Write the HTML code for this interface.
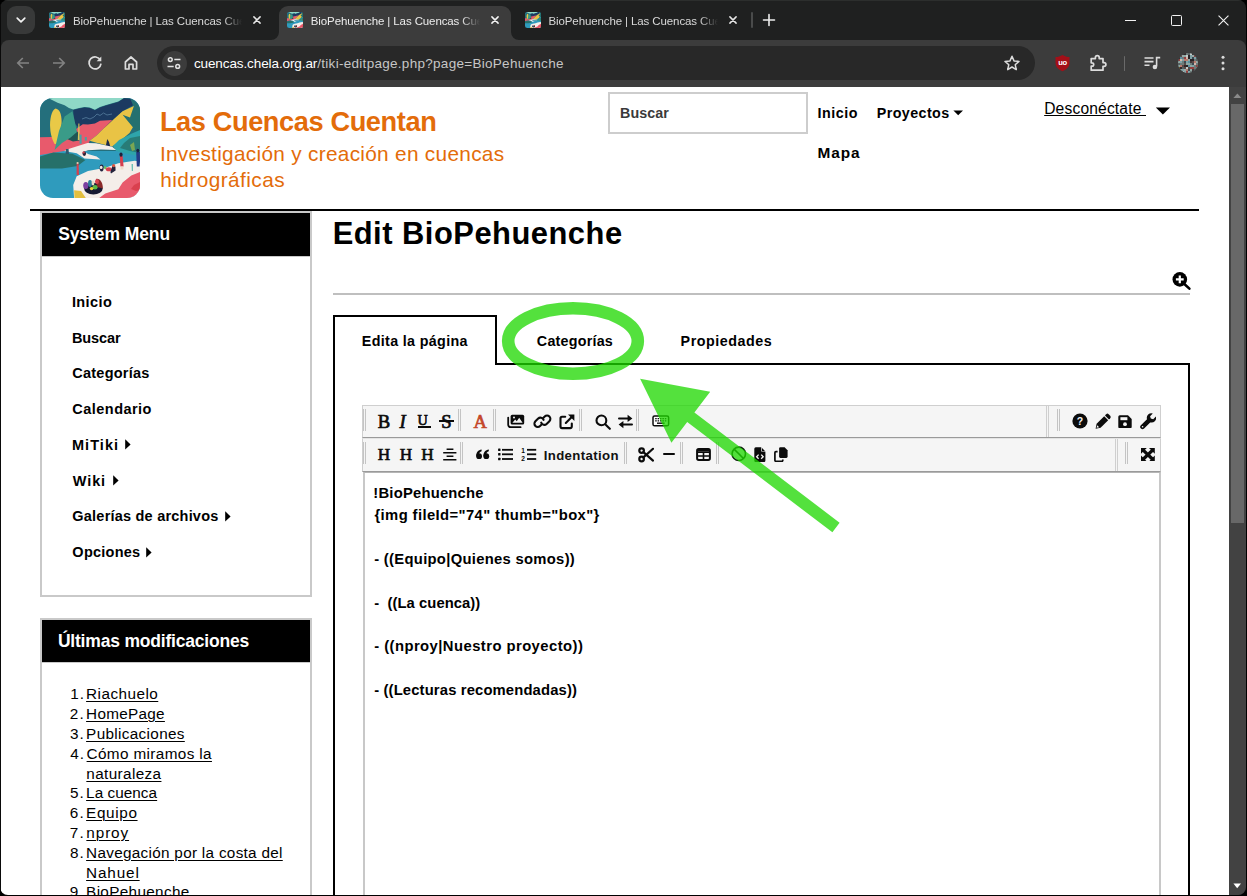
<!DOCTYPE html>
<html lang="es">
<head>
<meta charset="utf-8">
<title>BioPehuenche | Las Cuencas Cuentan</title>
<style>
*{box-sizing:border-box;margin:0;padding:0}
html,body{width:1247px;height:896px;overflow:hidden;background:#000}
body{position:relative;font-family:"Liberation Sans",sans-serif;}
.abs{position:absolute}
.t{position:absolute;white-space:nowrap;font-family:"Liberation Sans",sans-serif;}
#win{position:absolute;left:0;top:0;width:1246px;height:895px;background:#1f2020;border-radius:8px;overflow:hidden}
#page{position:absolute;left:1px;top:87px;width:1228px;height:808px;background:#fff;overflow:hidden}
#scroll{position:absolute;left:1229px;top:87px;width:17px;height:808px;background:#424242}
#thumb{position:absolute;left:2px;top:17px;width:13px;height:419px;background:#686868}
.tabt{top:13px;height:16px;font-size:11.5px;line-height:16px;letter-spacing:-0.11px;white-space:nowrap;overflow:hidden;-webkit-mask-image:linear-gradient(90deg,#000 0,#000 150px,transparent 169px);mask-image:linear-gradient(90deg,#000 0,#000 150px,transparent 169px)}
.ct{position:absolute;white-space:nowrap;font-family:"Liberation Sans",sans-serif;}
</style>
</head>
<body>
<div id="win">
<div id="page"></div>
<div id="scroll"><div id="thumb"></div></div>
<!-- tab strip -->
<div class="abs" style="left:7px;top:6px;width:27.5px;height:27.5px;border-radius:9px;background:#383939"></div>
<svg class="abs" style="left:15px;top:13.8px" width="12" height="12" viewBox="0 0 12 12"><path d="M2.2 4.2 L6 7.8 L9.8 4.2" fill="none" stroke="#f2f2f2" stroke-width="1.7" stroke-linecap="round" stroke-linejoin="round"/></svg>
<!-- active tab -->
<div class="abs" style="left:279px;top:6px;width:231.5px;height:34px;background:#3c3c3c;border-radius:9px 9px 0 0"></div>
<svg class="abs" style="left:271px;top:32px" width="8" height="8" viewBox="0 0 8 8"><path d="M8 0 V8 H0 A8 8 0 0 0 8 0Z" fill="#3c3c3c"/></svg>
<svg class="abs" style="left:510.5px;top:32px" width="8" height="8" viewBox="0 0 8 8"><path d="M0 0 V8 H8 A8 8 0 0 1 0 0Z" fill="#3c3c3c"/></svg>
<!-- favicons -->
<svg class="abs" style="left:48.8px;top:12px;border-radius:2.5px;overflow:hidden" width="16" height="16" viewBox="0 0 100 100"><rect width="100" height="100" fill="#2f9bbd"/>
<rect width="100" height="53" fill="#246f7c"/>
<path d="M8 0 L17.6 4.7 L24.6 7.3 L28.9 9.9 L33.2 11.4 L39.3 9.9 L44.5 9 L49.7 9.4 L54.9 11.8 L60 9 L65.3 7.3 L71.3 5.5 L78.3 3.4 L84 0 Z" fill="#8fd8c7"/>
<path d="M33.2 11.9 L39.3 10.4 L44.5 9.5 L49.7 9.9 L54.9 12.3 L60 9.5 L65.3 7.8 L71.3 6 L78.3 3.9 L84 0.3 L90.4 0.8 L93 7.3 L82.6 13.3 L74 21 L66 30 L40 31 L34.1 25 Z" fill="#1c3a61"/>
<path d="M36 31 L42.8 26.3 L48 26.6 L54.9 25.4 L60 22.8 L72.2 22 L65.3 28.9 L56.6 37.6 L49.7 42.8 L48 47 L30 52 L0 57 L0 39.3 L12 39 L20 42 L30 40 Z" fill="#e85a6c"/>
<path d="M93.9 8.1 L82.6 13.3 L74 21 L65.3 28.9 L56.6 37.6 L49.7 42.8 L56.6 44.8 L72.2 48.5 L80 43 L89.5 35 L96 24 Z" fill="#e9c345"/>
<path d="M91.3 1.2 L100 9 L100 37 L93.9 30.6 L82.6 16.8 L90 19.5 L93.9 8 Z" fill="#24706f"/>
<path d="M100 32 L91.3 35.8 L79.1 42 L73 48 L76 53 L88 56 L100 58 Z" fill="#2ea4aa"/>
<path d="M84 45 L90 40 L100 38 L100 55 L90 53 L80 50 Z" fill="#27766f" opacity=".85"/><path d="M90 47 L94 44 L95 52 L92 53 Z" fill="#8fb04a" opacity=".8"/>
<path d="M15.5 10.5 C11.5 12 9.5 22 10.2 30 C10.5 38 13.5 44 14.6 46 L17.5 46 C19.5 40 21.8 30 21.6 23 C21.5 16 19.5 11 15.5 10.5 Z" fill="#e9c947"/>
<path d="M30 36 L36 32.5 L39.8 36 L39.4 42.6 L33 43.4 L27 41 Z" fill="#1f5654"/>
<path d="M32.4 13.3 L24.6 18.5 L19 33 L14.6 52 L22 45 L30.6 39.5 L37 34 L34.5 22 Z" fill="#3a9b88"/>
<path d="M47.5 45 L56 45.2 L72.2 48.8 L76 52 L61 51.5 L48 52.3 L44.5 53.5 L48 56 L56.6 58.6 L60.5 61.4 L44.5 60.4 L36.7 55.2 L24 53 L30 50.5 Z" fill="#f4eee9"/>
<path d="M0 58.4 L13.3 54.5 L32.4 55.8 L45.4 61.9 L37.6 67.9 L22 70.5 L0 70.5 Z" fill="#26706a"/>
<path d="M34.1 100 L33.2 87 L36.7 78.3 L48 73 L65.3 69.7 L78.3 65.3 L94.7 62.7 L100 63.6 L100 100 Z" fill="#f4eee9"/>
<path d="M100 74 L91.3 77.4 L82.6 84.4 L78.3 91.3 L65.3 95.6 L59.2 100 L100 100 Z" fill="#e85a6c"/>
<path d="M100 84 L94 87 L91 91 L96 93 L100 92 Z" fill="#d9404f"/>
<path d="M34.1 92.2 L41 93 L45.8 100 L34.5 100 Z" fill="#e2bf3f"/>
<ellipse cx="53.4" cy="90.6" rx="9.3" ry="5.8" fill="#161b33"/>
<ellipse cx="45.8" cy="87.5" rx="2.6" ry="3.6" fill="#7b3fa0"/>
<ellipse cx="50" cy="85.5" rx="2" ry="3.4" fill="#2d7f9a"/>
<ellipse cx="53" cy="85" rx="1.4" ry="2.6" fill="#e9d9c8"/>
<path d="M56 81 C60 80 63 85 62.8 90.5 L57 89 Z" fill="#8a2a2a"/>
<ellipse cx="57" cy="83.5" rx="2" ry="2.6" fill="#d8414f"/>
<ellipse cx="55" cy="89.2" rx="2.6" ry="2.2" fill="#57b947"/>
<ellipse cx="51.6" cy="90.6" rx="1.8" ry="1.6" fill="#e6d23a"/></svg>
<svg class="abs" style="left:286.9px;top:12px;border-radius:2.5px;overflow:hidden" width="16" height="16" viewBox="0 0 100 100"><rect width="100" height="100" fill="#2f9bbd"/>
<rect width="100" height="53" fill="#246f7c"/>
<path d="M8 0 L17.6 4.7 L24.6 7.3 L28.9 9.9 L33.2 11.4 L39.3 9.9 L44.5 9 L49.7 9.4 L54.9 11.8 L60 9 L65.3 7.3 L71.3 5.5 L78.3 3.4 L84 0 Z" fill="#8fd8c7"/>
<path d="M33.2 11.9 L39.3 10.4 L44.5 9.5 L49.7 9.9 L54.9 12.3 L60 9.5 L65.3 7.8 L71.3 6 L78.3 3.9 L84 0.3 L90.4 0.8 L93 7.3 L82.6 13.3 L74 21 L66 30 L40 31 L34.1 25 Z" fill="#1c3a61"/>
<path d="M36 31 L42.8 26.3 L48 26.6 L54.9 25.4 L60 22.8 L72.2 22 L65.3 28.9 L56.6 37.6 L49.7 42.8 L48 47 L30 52 L0 57 L0 39.3 L12 39 L20 42 L30 40 Z" fill="#e85a6c"/>
<path d="M93.9 8.1 L82.6 13.3 L74 21 L65.3 28.9 L56.6 37.6 L49.7 42.8 L56.6 44.8 L72.2 48.5 L80 43 L89.5 35 L96 24 Z" fill="#e9c345"/>
<path d="M91.3 1.2 L100 9 L100 37 L93.9 30.6 L82.6 16.8 L90 19.5 L93.9 8 Z" fill="#24706f"/>
<path d="M100 32 L91.3 35.8 L79.1 42 L73 48 L76 53 L88 56 L100 58 Z" fill="#2ea4aa"/>
<path d="M84 45 L90 40 L100 38 L100 55 L90 53 L80 50 Z" fill="#27766f" opacity=".85"/><path d="M90 47 L94 44 L95 52 L92 53 Z" fill="#8fb04a" opacity=".8"/>
<path d="M15.5 10.5 C11.5 12 9.5 22 10.2 30 C10.5 38 13.5 44 14.6 46 L17.5 46 C19.5 40 21.8 30 21.6 23 C21.5 16 19.5 11 15.5 10.5 Z" fill="#e9c947"/>
<path d="M30 36 L36 32.5 L39.8 36 L39.4 42.6 L33 43.4 L27 41 Z" fill="#1f5654"/>
<path d="M32.4 13.3 L24.6 18.5 L19 33 L14.6 52 L22 45 L30.6 39.5 L37 34 L34.5 22 Z" fill="#3a9b88"/>
<path d="M47.5 45 L56 45.2 L72.2 48.8 L76 52 L61 51.5 L48 52.3 L44.5 53.5 L48 56 L56.6 58.6 L60.5 61.4 L44.5 60.4 L36.7 55.2 L24 53 L30 50.5 Z" fill="#f4eee9"/>
<path d="M0 58.4 L13.3 54.5 L32.4 55.8 L45.4 61.9 L37.6 67.9 L22 70.5 L0 70.5 Z" fill="#26706a"/>
<path d="M34.1 100 L33.2 87 L36.7 78.3 L48 73 L65.3 69.7 L78.3 65.3 L94.7 62.7 L100 63.6 L100 100 Z" fill="#f4eee9"/>
<path d="M100 74 L91.3 77.4 L82.6 84.4 L78.3 91.3 L65.3 95.6 L59.2 100 L100 100 Z" fill="#e85a6c"/>
<path d="M100 84 L94 87 L91 91 L96 93 L100 92 Z" fill="#d9404f"/>
<path d="M34.1 92.2 L41 93 L45.8 100 L34.5 100 Z" fill="#e2bf3f"/>
<ellipse cx="53.4" cy="90.6" rx="9.3" ry="5.8" fill="#161b33"/>
<ellipse cx="45.8" cy="87.5" rx="2.6" ry="3.6" fill="#7b3fa0"/>
<ellipse cx="50" cy="85.5" rx="2" ry="3.4" fill="#2d7f9a"/>
<ellipse cx="53" cy="85" rx="1.4" ry="2.6" fill="#e9d9c8"/>
<path d="M56 81 C60 80 63 85 62.8 90.5 L57 89 Z" fill="#8a2a2a"/>
<ellipse cx="57" cy="83.5" rx="2" ry="2.6" fill="#d8414f"/>
<ellipse cx="55" cy="89.2" rx="2.6" ry="2.2" fill="#57b947"/>
<ellipse cx="51.6" cy="90.6" rx="1.8" ry="1.6" fill="#e6d23a"/></svg>
<svg class="abs" style="left:524.9px;top:12px;border-radius:2.5px;overflow:hidden" width="16" height="16" viewBox="0 0 100 100"><rect width="100" height="100" fill="#2f9bbd"/>
<rect width="100" height="53" fill="#246f7c"/>
<path d="M8 0 L17.6 4.7 L24.6 7.3 L28.9 9.9 L33.2 11.4 L39.3 9.9 L44.5 9 L49.7 9.4 L54.9 11.8 L60 9 L65.3 7.3 L71.3 5.5 L78.3 3.4 L84 0 Z" fill="#8fd8c7"/>
<path d="M33.2 11.9 L39.3 10.4 L44.5 9.5 L49.7 9.9 L54.9 12.3 L60 9.5 L65.3 7.8 L71.3 6 L78.3 3.9 L84 0.3 L90.4 0.8 L93 7.3 L82.6 13.3 L74 21 L66 30 L40 31 L34.1 25 Z" fill="#1c3a61"/>
<path d="M36 31 L42.8 26.3 L48 26.6 L54.9 25.4 L60 22.8 L72.2 22 L65.3 28.9 L56.6 37.6 L49.7 42.8 L48 47 L30 52 L0 57 L0 39.3 L12 39 L20 42 L30 40 Z" fill="#e85a6c"/>
<path d="M93.9 8.1 L82.6 13.3 L74 21 L65.3 28.9 L56.6 37.6 L49.7 42.8 L56.6 44.8 L72.2 48.5 L80 43 L89.5 35 L96 24 Z" fill="#e9c345"/>
<path d="M91.3 1.2 L100 9 L100 37 L93.9 30.6 L82.6 16.8 L90 19.5 L93.9 8 Z" fill="#24706f"/>
<path d="M100 32 L91.3 35.8 L79.1 42 L73 48 L76 53 L88 56 L100 58 Z" fill="#2ea4aa"/>
<path d="M84 45 L90 40 L100 38 L100 55 L90 53 L80 50 Z" fill="#27766f" opacity=".85"/><path d="M90 47 L94 44 L95 52 L92 53 Z" fill="#8fb04a" opacity=".8"/>
<path d="M15.5 10.5 C11.5 12 9.5 22 10.2 30 C10.5 38 13.5 44 14.6 46 L17.5 46 C19.5 40 21.8 30 21.6 23 C21.5 16 19.5 11 15.5 10.5 Z" fill="#e9c947"/>
<path d="M30 36 L36 32.5 L39.8 36 L39.4 42.6 L33 43.4 L27 41 Z" fill="#1f5654"/>
<path d="M32.4 13.3 L24.6 18.5 L19 33 L14.6 52 L22 45 L30.6 39.5 L37 34 L34.5 22 Z" fill="#3a9b88"/>
<path d="M47.5 45 L56 45.2 L72.2 48.8 L76 52 L61 51.5 L48 52.3 L44.5 53.5 L48 56 L56.6 58.6 L60.5 61.4 L44.5 60.4 L36.7 55.2 L24 53 L30 50.5 Z" fill="#f4eee9"/>
<path d="M0 58.4 L13.3 54.5 L32.4 55.8 L45.4 61.9 L37.6 67.9 L22 70.5 L0 70.5 Z" fill="#26706a"/>
<path d="M34.1 100 L33.2 87 L36.7 78.3 L48 73 L65.3 69.7 L78.3 65.3 L94.7 62.7 L100 63.6 L100 100 Z" fill="#f4eee9"/>
<path d="M100 74 L91.3 77.4 L82.6 84.4 L78.3 91.3 L65.3 95.6 L59.2 100 L100 100 Z" fill="#e85a6c"/>
<path d="M100 84 L94 87 L91 91 L96 93 L100 92 Z" fill="#d9404f"/>
<path d="M34.1 92.2 L41 93 L45.8 100 L34.5 100 Z" fill="#e2bf3f"/>
<ellipse cx="53.4" cy="90.6" rx="9.3" ry="5.8" fill="#161b33"/>
<ellipse cx="45.8" cy="87.5" rx="2.6" ry="3.6" fill="#7b3fa0"/>
<ellipse cx="50" cy="85.5" rx="2" ry="3.4" fill="#2d7f9a"/>
<ellipse cx="53" cy="85" rx="1.4" ry="2.6" fill="#e9d9c8"/>
<path d="M56 81 C60 80 63 85 62.8 90.5 L57 89 Z" fill="#8a2a2a"/>
<ellipse cx="57" cy="83.5" rx="2" ry="2.6" fill="#d8414f"/>
<ellipse cx="55" cy="89.2" rx="2.6" ry="2.2" fill="#57b947"/>
<ellipse cx="51.6" cy="90.6" rx="1.8" ry="1.6" fill="#e6d23a"/></svg>
<!-- tab titles -->
<div class="abs tabt" style="left:73px;width:170px;color:#d9d9d9">BioPehuenche | Las Cuencas Cuentan</div>
<div class="abs tabt" style="left:310.8px;width:170px;color:#ececec">BioPehuenche | Las Cuencas Cuentan</div>
<div class="abs tabt" style="left:548.5px;width:170px;color:#d9d9d9">BioPehuenche | Las Cuencas Cuentan</div>
<!-- close X -->
<svg class="abs" style="left:252px;top:15px" width="10" height="10" viewBox="0 0 10 10"><path d="M1.9 1.9 L8.1 8.1 M8.1 1.9 L1.9 8.1" stroke="#e6e6e6" stroke-width="1.5" stroke-linecap="round"/></svg>
<svg class="abs" style="left:490px;top:15px" width="10" height="10" viewBox="0 0 10 10"><path d="M1.9 1.9 L8.1 8.1 M8.1 1.9 L1.9 8.1" stroke="#f4f4f4" stroke-width="1.5" stroke-linecap="round"/></svg>
<svg class="abs" style="left:728px;top:15px" width="10" height="10" viewBox="0 0 10 10"><path d="M1.9 1.9 L8.1 8.1 M8.1 1.9 L1.9 8.1" stroke="#e6e6e6" stroke-width="1.5" stroke-linecap="round"/></svg>
<div class="abs" style="left:751px;top:12px;width:2px;height:16px;background:#4a4b4b;border-radius:1px"></div>
<svg class="abs" style="left:762px;top:13px" width="14" height="14" viewBox="0 0 14 14"><path d="M7 1.5 V12.5 M1.5 7 H12.5" stroke="#ededed" stroke-width="1.6" stroke-linecap="round"/></svg>
<!-- window controls -->
<div class="abs" style="left:1125px;top:19.5px;width:11px;height:1.3px;background:#f2f2f2"></div>
<div class="abs" style="left:1171px;top:14.5px;width:11px;height:11px;border:1.3px solid #f2f2f2;border-radius:1.5px"></div>
<svg class="abs" style="left:1217.5px;top:14.5px" width="11" height="11" viewBox="0 0 12 12"><path d="M0.6 0.6 L11.4 11.4 M11.4 0.6 L0.6 11.4" stroke="#f2f2f2" stroke-width="1.2"/></svg>
<!-- toolbar -->
<div class="abs" style="left:1px;top:40px;width:1245px;height:47px;background:#3c3c3c;border-radius:8px 8px 0 0"></div>
<svg class="abs" style="left:14px;top:54px" width="18" height="18" viewBox="0 0 18 18"><path d="M15 9 H4.2 M8.8 4 L3.8 9 L8.8 14" fill="none" stroke="#828282" stroke-width="1.7" stroke-linejoin="miter"/></svg>
<svg class="abs" style="left:50px;top:54px" width="18" height="18" viewBox="0 0 18 18"><path d="M3 9 H13.8 M9.2 4 L14.2 9 L9.2 14" fill="none" stroke="#828282" stroke-width="1.7"/></svg>
<svg class="abs" style="left:86px;top:54px" width="18" height="18" viewBox="0 0 18 18"><path d="M14.4 6.2 A6 6 0 1 0 15 9.6" fill="none" stroke="#dcdcdc" stroke-width="1.7"/><path d="M15.3 2.6 V7.2 H10.7 Z" fill="#dcdcdc"/></svg>
<svg class="abs" style="left:122px;top:54px" width="18" height="18" viewBox="0 0 18 18"><path d="M3.4 8 L9 3 L14.6 8 V15 H11 V10.4 H7 V15 H3.4 Z" fill="none" stroke="#dcdcdc" stroke-width="1.7" stroke-linejoin="round"/></svg>
<!-- omnibox -->
<div class="abs" style="left:157px;top:46px;width:878px;height:34px;border-radius:17px;background:#282828"></div>
<div class="abs" style="left:161.5px;top:50.5px;width:25px;height:25px;border-radius:50%;background:#3c3c3c"></div>
<svg class="abs" style="left:166px;top:55px" width="16" height="16" viewBox="0 0 16 16"><g fill="none" stroke="#e3e3e3" stroke-width="1.5"><circle cx="4.3" cy="4.6" r="1.9"/><path d="M8.3 4.6 H14.5"/><circle cx="11.7" cy="11.4" r="1.9"/><path d="M1.5 11.4 H7.7"/></g></svg>
<div class="abs ct" style="left:193.9px;top:55.6px;font-size:13.5px;line-height:16px;color:#c6c6c6;letter-spacing:0.29px"><span style="color:#fff;letter-spacing:-0.1px">cuencas.chela.org.ar</span>/tiki-editpage.php?page=BioPehuenche</div>
<!-- star -->
<svg class="abs" style="left:1003px;top:54px" width="18" height="18" viewBox="0 0 18 18"><path d="M9 2.3 L11 6.9 L16 7.4 L12.2 10.7 L13.3 15.6 L9 13 L4.7 15.6 L5.8 10.7 L2 7.4 L7 6.9 Z" fill="none" stroke="#dcdcdc" stroke-width="1.5" stroke-linejoin="round"/></svg>
<!-- ublock -->
<svg class="abs" style="left:1054px;top:54px" width="17" height="18" viewBox="0 0 17 18"><path d="M8.5 0.9 C6.4 2.2 4 2.9 1.5 3.1 V8.6 C1.5 12.8 4.2 15.6 8.5 17.3 C12.8 15.6 15.5 12.8 15.5 8.6 V3.1 C13 2.9 10.6 2.2 8.5 0.9Z" fill="#a30f18"/><text x="8.5" y="11.4" font-family="Liberation Sans, sans-serif" font-size="7.6" font-weight="700" fill="#fff" text-anchor="middle" letter-spacing="-0.3">uo</text></svg>
<!-- puzzle -->
<svg class="abs" style="left:1088px;top:53px" width="20" height="20" viewBox="0 0 20 20"><path d="M3.2 5.6 H7.4 V4.6 A1.9 1.9 0 0 1 11.2 4.6 V5.6 H15 V9.6 H16 A1.9 1.9 0 0 1 16 13.4 H15 V17.2 H3.2 V13.2 H4 A1.7 1.7 0 0 0 4 9.8 H3.2 Z" fill="none" stroke="#dcdcdc" stroke-width="1.7" stroke-linejoin="round"/></svg>
<div class="abs" style="left:1123.8px;top:55.5px;width:1.6px;height:15px;background:#6a6a6a;border-radius:1px"></div>
<!-- media -->
<svg class="abs" style="left:1143px;top:54px" width="19" height="18" viewBox="0 0 19 18"><g fill="none" stroke="#dcdcdc" stroke-width="1.6"><path d="M1.5 4 H10.5 M1.5 7.6 H10.5 M1.5 11.2 H6.5"/><path d="M13.6 12.6 V3.6 H17.2"/></g><circle cx="11.9" cy="13" r="2.3" fill="#dcdcdc"/></svg>
<!-- avatar -->
<svg class="abs" style="left:1178.4px;top:52.7px;border-radius:50%;overflow:hidden" width="20" height="20" viewBox="0 0 20 20"><rect width="20" height="20" fill="#6b7472"/><rect x="4" y="0" width="4" height="2" fill="#30282b"/><rect x="6" y="0" width="2" height="2" fill="#30282b"/><rect x="8" y="0" width="2" height="2" fill="#6d7b7a"/><rect x="10" y="0" width="4" height="2" fill="#566062"/><rect x="12" y="0" width="2" height="2" fill="#c4ccc9"/><rect x="14" y="0" width="2" height="2" fill="#30282b"/><rect x="2" y="2" width="2" height="2" fill="#5b4a48"/><rect x="4" y="2" width="4" height="2" fill="#9aa9a7"/><rect x="6" y="2" width="2" height="2" fill="#8fa8a4"/><rect x="8" y="2" width="4" height="2" fill="#c4ccc9"/><rect x="10" y="2" width="4" height="2" fill="#2a2226"/><rect x="12" y="2" width="2" height="2" fill="#7fa3a8"/><rect x="14" y="2" width="2" height="2" fill="#9aa9a7"/><rect x="16" y="2" width="4" height="2" fill="#943f3f"/><rect x="0" y="4" width="2" height="2" fill="#2a2226"/><rect x="2" y="4" width="2" height="2" fill="#5a90a0"/><rect x="4" y="4" width="4" height="2" fill="#6d7b7a"/><rect x="6" y="4" width="4" height="2" fill="#943f3f"/><rect x="8" y="4" width="2" height="2" fill="#d1b5ac"/><rect x="10" y="4" width="4" height="2" fill="#2a2226"/><rect x="12" y="4" width="2" height="2" fill="#7fa3a8"/><rect x="14" y="4" width="2" height="2" fill="#3c4a52"/><rect x="16" y="4" width="4" height="2" fill="#7fa3a8"/><rect x="18" y="4" width="2" height="2" fill="#3c4a52"/><rect x="0" y="6" width="4" height="2" fill="#943f3f"/><rect x="2" y="6" width="2" height="2" fill="#d1b5ac"/><rect x="4" y="6" width="4" height="2" fill="#7fa3a8"/><rect x="6" y="6" width="2" height="2" fill="#b97a6c"/><rect x="8" y="6" width="2" height="2" fill="#b97a6c"/><rect x="10" y="6" width="2" height="2" fill="#8fa8a4"/><rect x="12" y="6" width="4" height="2" fill="#2a2226"/><rect x="14" y="6" width="2" height="2" fill="#2a2226"/><rect x="16" y="6" width="2" height="2" fill="#6d7b7a"/><rect x="18" y="6" width="2" height="2" fill="#566062"/><rect x="0" y="8" width="2" height="2" fill="#8fa8a4"/><rect x="2" y="8" width="4" height="2" fill="#7fa3a8"/><rect x="4" y="8" width="4" height="2" fill="#6d7b7a"/><rect x="6" y="8" width="2" height="2" fill="#3c4a52"/><rect x="8" y="8" width="2" height="2" fill="#7fa3a8"/><rect x="10" y="8" width="2" height="2" fill="#5a90a0"/><rect x="12" y="8" width="2" height="2" fill="#443a3c"/><rect x="14" y="8" width="2" height="2" fill="#5b4a48"/><rect x="16" y="8" width="2" height="2" fill="#b97a6c"/><rect x="18" y="8" width="2" height="2" fill="#9aa9a7"/><rect x="0" y="10" width="2" height="2" fill="#566062"/><rect x="2" y="10" width="2" height="2" fill="#6d7b7a"/><rect x="4" y="10" width="4" height="2" fill="#6d7b7a"/><rect x="6" y="10" width="2" height="2" fill="#5b4a48"/><rect x="8" y="10" width="2" height="2" fill="#8fa8a4"/><rect x="10" y="10" width="2" height="2" fill="#8fa8a4"/><rect x="12" y="10" width="2" height="2" fill="#6d7b7a"/><rect x="14" y="10" width="4" height="2" fill="#3c4a52"/><rect x="16" y="10" width="2" height="2" fill="#d1b5ac"/><rect x="18" y="10" width="2" height="2" fill="#6d7b7a"/><rect x="0" y="12" width="4" height="2" fill="#8fa8a4"/><rect x="2" y="12" width="2" height="2" fill="#b97a6c"/><rect x="4" y="12" width="2" height="2" fill="#5b4a48"/><rect x="6" y="12" width="2" height="2" fill="#30282b"/><rect x="8" y="12" width="4" height="2" fill="#2a2226"/><rect x="10" y="12" width="2" height="2" fill="#5a90a0"/><rect x="12" y="12" width="2" height="2" fill="#8fa8a4"/><rect x="14" y="12" width="2" height="2" fill="#7fa3a8"/><rect x="16" y="12" width="4" height="2" fill="#6d7b7a"/><rect x="18" y="12" width="2" height="2" fill="#943f3f"/><rect x="0" y="14" width="2" height="2" fill="#7a5a2a"/><rect x="2" y="14" width="2" height="2" fill="#30282b"/><rect x="4" y="14" width="4" height="2" fill="#566062"/><rect x="6" y="14" width="2" height="2" fill="#5b4a48"/><rect x="8" y="14" width="4" height="2" fill="#c4ccc9"/><rect x="10" y="14" width="2" height="2" fill="#5b4a48"/><rect x="12" y="14" width="4" height="2" fill="#943f3f"/><rect x="14" y="14" width="4" height="2" fill="#943f3f"/><rect x="16" y="14" width="2" height="2" fill="#6d7b7a"/><rect x="18" y="14" width="4" height="2" fill="#6d7b7a"/><rect x="2" y="16" width="2" height="2" fill="#8fa8a4"/><rect x="4" y="16" width="2" height="2" fill="#7fa3a8"/><rect x="6" y="16" width="2" height="2" fill="#9aa9a7"/><rect x="8" y="16" width="2" height="2" fill="#b97a6c"/><rect x="10" y="16" width="2" height="2" fill="#3c4a52"/><rect x="12" y="16" width="2" height="2" fill="#8fa8a4"/><rect x="14" y="16" width="4" height="2" fill="#443a3c"/><rect x="16" y="16" width="2" height="2" fill="#566062"/><rect x="4" y="18" width="4" height="2" fill="#c4ccc9"/><rect x="6" y="18" width="2" height="2" fill="#7fa3a8"/><rect x="8" y="18" width="2" height="2" fill="#943f3f"/><rect x="10" y="18" width="2" height="2" fill="#7fa3a8"/><rect x="12" y="18" width="2" height="2" fill="#6d7b7a"/><rect x="14" y="18" width="2" height="2" fill="#2a2226"/></svg>
<!-- dots -->
<svg class="abs" style="left:1220px;top:54px" width="6" height="18" viewBox="0 0 6 18"><circle cx="3" cy="3.2" r="1.5" fill="#dcdcdc"/><circle cx="3" cy="9" r="1.5" fill="#dcdcdc"/><circle cx="3" cy="14.8" r="1.5" fill="#dcdcdc"/></svg>

<!-- page static structure -->
<div class="abs" style="left:30px;top:209px;width:1169px;height:2px;background:#000"></div>
<!-- sidebar box 1 -->
<div class="abs" style="left:40px;top:211px;width:272px;height:386px;border:2px solid #c9c9c9;background:#fff"></div>
<div class="abs" style="left:42px;top:213px;width:268px;height:43px;background:#000"></div>
<div class="abs" style="left:42px;top:256px;width:268px;height:1px;background:#c9c9c9"></div>
<!-- sidebar box 2 -->
<div class="abs" style="left:40px;top:618px;width:272px;height:300px;border:2px solid #c9c9c9;background:#fff"></div>
<div class="abs" style="left:42px;top:620px;width:268px;height:42px;background:#000"></div>
<div class="abs" style="left:42px;top:662px;width:268px;height:1px;background:#c9c9c9"></div>
<!-- search box -->
<div class="abs" style="left:608px;top:92px;width:200px;height:42px;border:2px solid #cdcdcd;background:#fff"></div>
<!-- main -->
<div class="abs" style="left:333px;top:293px;width:857px;height:2px;background:#bfbfbf"></div>
<div class="abs" style="left:333px;top:315px;width:2px;height:600px;background:#000"></div>
<div class="abs" style="left:333px;top:315px;width:164px;height:2px;background:#000"></div>
<div class="abs" style="left:495px;top:315px;width:2px;height:50px;background:#000"></div>
<div class="abs" style="left:495px;top:363px;width:695px;height:2px;background:#000"></div>
<div class="abs" style="left:1188px;top:363px;width:2px;height:560px;background:#000"></div>
<!-- editor toolbar -->
<div class="abs" style="left:362px;top:405px;width:799px;height:33px;background:#f5f5f5;border:1px solid #cfcfcf;border-bottom:1px solid #9a9a9a"></div>
<div class="abs" style="left:362px;top:438px;width:799px;height:34px;background:#f5f5f5;border:1px solid #cfcfcf;border-top:1px solid #e4e4e4;border-bottom:1px solid #9a9a9a"></div>
<!-- textarea -->
<div class="abs" style="left:363px;top:472px;width:798px;height:440px;background:#fff;border:2px solid #c8c8c8;border-top:1px solid #b5b5b5"></div>

<svg class="abs" style="left:40px;top:98px;border-radius:13px;overflow:hidden" width="100" height="100" viewBox="0 0 100 100"><rect width="100" height="100" fill="#2f9bbd"/>
<!-- upper scene base -->
<rect width="100" height="53" fill="#246f7c"/>
<!-- sky -->
<path d="M8 0 L17.6 4.7 L24.6 7.3 L28.9 9.9 L33.2 11.4 L39.3 9.9 L44.5 9 L49.7 9.4 L54.9 11.8 L60 9 L65.3 7.3 L71.3 5.5 L78.3 3.4 L84 0 Z" fill="#8fd8c7"/>
<!-- navy mountains -->
<path d="M33.2 11.9 L39.3 10.4 L44.5 9.5 L49.7 9.9 L54.9 12.3 L60 9.5 L65.3 7.8 L71.3 6 L78.3 3.9 L84 0.3 L90.4 0.8 L93 7.3 L82.6 13.3 L74 21 L66 30 L40 31 L34.1 25 Z" fill="#1c3a61"/>
<!-- town outline -->
<path d="M42 21 L46 19.5 L50 21 L54 19 L57 16 L60 17.5 L63.5 15 L67 17 L72 16" fill="none" stroke="#4f7596" stroke-width="0.9"/>
<!-- pink hills -->
<path d="M36 31 L42.8 26.3 L48 26.6 L54.9 25.4 L60 22.8 L72.2 22 L65.3 28.9 L56.6 37.6 L49.7 42.8 L48 47 L30 52 L0 57 L0 39.3 L12 39 L20 42 L30 40 Z" fill="#e85a6c"/>
<!-- yellow hill -->
<path d="M93.9 8.1 L82.6 13.3 L74 21 L65.3 28.9 L56.6 37.6 L49.7 42.8 L56.6 44.8 L72.2 48.5 L80 43 L89.5 35 L96 24 Z" fill="#e9c345"/>
<!-- right palm -->
<path d="M91.3 1.2 L100 9 L100 37 L93.9 30.6 L82.6 16.8 L90 19.5 L93.9 8 Z" fill="#24706f"/>
<!-- right teal bush -->
<path d="M100 32 L91.3 35.8 L79.1 42 L73 48 L76 53 L88 56 L100 58 Z" fill="#2ea4aa"/>
<path d="M84 45 L90 40 L100 38 L100 55 L90 53 L80 50 Z" fill="#27766f" opacity=".85"/><path d="M90 47 L94 44 L95 52 L92 53 Z" fill="#8fb04a" opacity=".8"/>
<!-- yellow tree -->
<path d="M15.5 10.5 C11.5 12 9.5 22 10.2 30 C10.5 38 13.5 44 14.6 46 L17.5 46 C19.5 40 21.8 30 21.6 23 C21.5 16 19.5 11 15.5 10.5 Z" fill="#e9c947"/>
<!-- green leaf tree -->
<path d="M30 36 L36 32.5 L39.8 36 L39.4 42.6 L33 43.4 L27 41 Z" fill="#1f5654"/>
<path d="M32.4 13.3 L24.6 18.5 L19 33 L14.6 52 L22 45 L30.6 39.5 L37 34 L34.5 22 Z" fill="#3a9b88"/>
<path d="M38.4 25.4 L39.4 25.4 L39.8 42 L37.8 42 Z" fill="#d9c45a"/>
<rect x="39.6" y="36.7" width="2" height="9" fill="#4aa0a3"/>
<rect x="44.8" y="39" width="2" height="3.6" fill="#4aa0a3"/>
<!-- kneeling figure -->
<path d="M67.3 41 L69 44 L70.2 48.3 L65.8 48.3 L66.6 44 Z" fill="#1b2a4a"/>
<!-- upper white sand -->
<path d="M47.5 45 L56 45.2 L72.2 48.8 L76 52 L61 51.5 L48 52.3 L44.5 53.5 L48 56 L56.6 58.6 L60.5 61.4 L44.5 60.4 L36.7 55.2 L24 53 L30 50.5 Z" fill="#f4eee9"/>
<!-- island -->
<path d="M0 58.4 L13.3 54.5 L32.4 55.8 L45.4 61.9 L37.6 67.9 L22 70.5 L0 70.5 Z" fill="#26706a"/>
<path d="M26 51 L28.5 51 L29 56 L25.6 56 Z" fill="#2d5a70"/>
<!-- main sand -->
<path d="M34.1 100 L33.2 87 L36.7 78.3 L48 73 L65.3 69.7 L78.3 65.3 L94.7 62.7 L100 63.6 L100 100 Z" fill="#f4eee9"/>
<!-- pink bottom right -->
<path d="M100 74 L91.3 77.4 L82.6 84.4 L78.3 91.3 L65.3 95.6 L59.2 100 L100 100 Z" fill="#e85a6c"/>
<path d="M100 84 L94 87 L91 91 L96 93 L100 92 Z" fill="#d9404f"/>
<!-- yellow bottom -->
<path d="M34.1 92.2 L41 93 L45.8 100 L34.5 100 Z" fill="#e2bf3f"/>
<!-- group -->
<ellipse cx="53.4" cy="90.6" rx="9.3" ry="5.8" fill="#161b33"/>
<ellipse cx="45.8" cy="87.5" rx="2.6" ry="3.6" fill="#7b3fa0"/>
<ellipse cx="50" cy="85.5" rx="2" ry="3.4" fill="#2d7f9a"/>
<ellipse cx="53" cy="85" rx="1.4" ry="2.6" fill="#e9d9c8"/>
<path d="M56 81 C60 80 63 85 62.8 90.5 L57 89 Z" fill="#8a2a2a"/>
<ellipse cx="57" cy="83.5" rx="2" ry="2.6" fill="#d8414f"/>
<ellipse cx="55" cy="89.2" rx="2.6" ry="2.2" fill="#57b947"/>
<ellipse cx="51.6" cy="90.6" rx="1.8" ry="1.6" fill="#e6d23a"/>
<!-- standing people -->
<path d="M36.6 65.5 L38.6 65.5 L39 77 L36.6 77 Z" fill="#d5404e"/>
<circle cx="37.6" cy="65" r="1.1" fill="#e9c9b0"/>
<path d="M79.8 58 L82.6 58 L83.6 68.5 L80.4 68.5 Z" fill="#d5404e"/>
<ellipse cx="81" cy="56.6" rx="1.6" ry="2.2" fill="#20203a"/>
<rect x="80.6" y="68.5" width="2.8" height="3" fill="#f2d9c9"/>
<path d="M96.2 54 L99.8 54 L100 63 L99.6 68.5 L96.8 68.5 Z" fill="#243b86"/>
<ellipse cx="97.8" cy="52.6" rx="1.5" ry="1.8" fill="#1a2240"/>
<!-- sitting people -->
<ellipse cx="61.6" cy="70" rx="2" ry="3.4" fill="#22243f"/>
<ellipse cx="61.2" cy="69.4" rx="1.4" ry="1.6" fill="#efe6e0"/>
<ellipse cx="65.2" cy="69.6" rx="1.3" ry="1.6" fill="#6fbf5a"/>
<ellipse cx="68.8" cy="71.2" rx="3" ry="2" fill="#d5404e"/>
<path d="M72.6 67.5 L75.4 68.5 L75.6 72.5 L71 75.5 L70.4 74 Z" fill="#25233c"/>
<ellipse cx="73.6" cy="67.6" rx="1.5" ry="1.6" fill="#e0563f"/>
<!-- person top -->
<ellipse cx="44.3" cy="55.6" rx="1.8" ry="2.4" fill="#2a2238"/>
<ellipse cx="43.6" cy="54.6" rx="1.2" ry="1" fill="#d5404e"/>
<!-- plant -->
<path d="M91.5 66 L93 66 L93 73 L91.8 73 Z" fill="#6fc1b5"/></svg>
<!-- editor icons -->
<div class="abs" style="left:363.4px;top:409px;width:1px;height:22px;background:#c4c4c4"></div><div class="abs" style="left:365.4px;top:409px;width:1px;height:22px;background:#c4c4c4"></div>
<div class="abs" style="left:458px;top:409px;width:1px;height:22px;background:#c4c4c4"></div><div class="abs" style="left:460px;top:409px;width:1px;height:22px;background:#c4c4c4"></div>
<div class="abs" style="left:492.5px;top:409px;width:1px;height:22px;background:#c4c4c4"></div><div class="abs" style="left:494.5px;top:409px;width:1px;height:22px;background:#c4c4c4"></div>
<div class="abs" style="left:579.3px;top:409px;width:1px;height:22px;background:#c4c4c4"></div><div class="abs" style="left:581.3px;top:409px;width:1px;height:22px;background:#c4c4c4"></div>
<div class="abs" style="left:636.2px;top:409px;width:1px;height:22px;background:#c4c4c4"></div><div class="abs" style="left:638.2px;top:409px;width:1px;height:22px;background:#c4c4c4"></div>
<div class="abs" style="left:363.4px;top:442px;width:1px;height:22px;background:#c4c4c4"></div><div class="abs" style="left:365.4px;top:442px;width:1px;height:22px;background:#c4c4c4"></div>
<div class="abs" style="left:460.3px;top:442px;width:1px;height:22px;background:#c4c4c4"></div><div class="abs" style="left:462.3px;top:442px;width:1px;height:22px;background:#c4c4c4"></div>
<div class="abs" style="left:623.6px;top:442px;width:1px;height:22px;background:#c4c4c4"></div><div class="abs" style="left:625.6px;top:442px;width:1px;height:22px;background:#c4c4c4"></div>
<div class="abs" style="left:680.2px;top:442px;width:1px;height:22px;background:#c4c4c4"></div><div class="abs" style="left:682.2px;top:442px;width:1px;height:22px;background:#c4c4c4"></div>
<div class="abs" style="left:715.5px;top:442px;width:1px;height:22px;background:#c4c4c4"></div><div class="abs" style="left:717.5px;top:442px;width:1px;height:22px;background:#c4c4c4"></div>
<div class="abs" style="left:1046.4px;top:406px;width:1px;height:31px;background:#cfcfcf"></div><div class="abs" style="left:1048.4px;top:406px;width:1px;height:31px;background:#cfcfcf"></div>
<div class="abs" style="left:1057.2px;top:409px;width:1px;height:22px;background:#c4c4c4"></div><div class="abs" style="left:1059.2px;top:409px;width:1px;height:22px;background:#c4c4c4"></div>
<div class="abs" style="left:1114.5px;top:439px;width:1px;height:32px;background:#cfcfcf"></div><div class="abs" style="left:1116.5px;top:439px;width:1px;height:32px;background:#cfcfcf"></div>
<div class="abs" style="left:1125.2px;top:442px;width:1px;height:22px;background:#c4c4c4"></div><div class="abs" style="left:1127.2px;top:442px;width:1px;height:22px;background:#c4c4c4"></div>
<span class="abs" style="left:377.8px;top:413.12px;font-family:'Liberation Serif',serif;font-size:18.6px;line-height:18.6px;font-weight:400;font-style:normal;color:#0b0b0b;-webkit-text-stroke:0.7px #0b0b0b;">B</span>
<span class="abs" style="left:399.4px;top:413.12px;font-family:'Liberation Serif',serif;font-size:18.6px;line-height:18.6px;font-weight:400;font-style:italic;color:#0b0b0b;-webkit-text-stroke:0.7px #0b0b0b;">I</span>
<span class="abs" style="left:417.4px;top:413.11px;font-family:'Liberation Serif',serif;font-size:14.2px;line-height:14.2px;font-weight:400;font-style:normal;color:#0b0b0b;-webkit-text-stroke:0.65px #0b0b0b;">U</span>
<div class="abs" style="left:418px;top:426.4px;width:12.6px;height:1.7px;background:#0b0b0b"></div>
<span class="abs" style="left:441.2px;top:413.12px;font-family:'Liberation Serif',serif;font-size:18.6px;line-height:18.6px;font-weight:400;font-style:normal;color:#0b0b0b;-webkit-text-stroke:0.7px #0b0b0b;">S</span>
<div class="abs" style="left:439px;top:420.2px;width:14.8px;height:1.6px;background:#0b0b0b"></div>
<span class="abs" style="left:473.4px;top:413.12px;font-family:'Liberation Serif',serif;font-size:18.6px;line-height:18.6px;font-weight:400;font-style:normal;color:#c4472a;-webkit-text-stroke:0.7px #c4472a;">A</span>
<span class="abs" style="left:377.7px;top:445.80px;font-family:'Liberation Serif',serif;font-size:17.2px;line-height:17.2px;font-weight:400;font-style:normal;color:#0b0b0b;-webkit-text-stroke:0.65px #0b0b0b;">H</span>
<span class="abs" style="left:399.7px;top:445.80px;font-family:'Liberation Serif',serif;font-size:17.2px;line-height:17.2px;font-weight:400;font-style:normal;color:#0b0b0b;-webkit-text-stroke:0.65px #0b0b0b;">H</span>
<span class="abs" style="left:421.3px;top:445.80px;font-family:'Liberation Serif',serif;font-size:17.2px;line-height:17.2px;font-weight:400;font-style:normal;color:#0b0b0b;-webkit-text-stroke:0.65px #0b0b0b;">H</span>
<svg class="abs" style="left:442.8px;top:448px" width="14" height="13" viewBox="0 0 14 13"><g stroke="#0b0b0b" stroke-width="1.5"><path d="M3.6 1.3 H10.4 M0.2 4.8 H13.4 M3.6 8.3 H10.4 M0.2 11.7 H13.4"/></g></svg>
<svg class="abs" style="left:475.6px;top:449px" width="14" height="11" viewBox="0 0 14 11"><g fill="#0b0b0b"><circle cx="3.1" cy="7.2" r="2.9"/><path d="M0.2 7.2 C0.2 3 2.2 0.9 5.6 0.4 L5.6 2.2 C3.9 2.7 3.2 3.8 3.1 5 Z"/><circle cx="10.3" cy="7.2" r="2.9"/><path d="M7.4 7.2 C7.4 3 9.4 0.9 12.8 0.4 L12.8 2.2 C11.1 2.7 10.4 3.8 10.3 5 Z"/></g></svg>
<svg class="abs" style="left:497.8px;top:448px" width="16" height="13" viewBox="0 0 16 13"><g fill="#0b0b0b"><rect x="0.1" y="0.6" width="2.4" height="2.4" rx=".5"/><rect x="0.1" y="5.1" width="2.4" height="2.4" rx=".5"/><rect x="0.1" y="9.8" width="2.4" height="2.4" rx=".5"/><rect x="4" y="0.9" width="11" height="1.8"/><rect x="4" y="5.4" width="11" height="1.8"/><rect x="4" y="10.1" width="11" height="1.8"/></g></svg>
<svg class="abs" style="left:521px;top:447px" width="16" height="15" viewBox="0 0 16 15"><g fill="#0b0b0b"><rect x="6" y="1.9" width="9.2" height="1.8"/><rect x="6" y="6.4" width="9.2" height="1.8"/><rect x="6" y="11.1" width="9.2" height="1.8"/></g><text x="0.2" y="5.6" font-family="Liberation Sans,sans-serif" font-weight="700" font-size="6.6" fill="#0b0b0b">1</text><text x="0.2" y="13.6" font-family="Liberation Sans,sans-serif" font-weight="700" font-size="6.6" fill="#0b0b0b">2</text></svg>
<svg class="abs" style="left:507px;top:414px" width="18" height="15" viewBox="0 0 18 15"><path d="M1.2 3.6 V10.8 A2.4 2.4 0 0 0 3.6 13.2 H13.6" fill="none" stroke="#0b0b0b" stroke-width="1.8" stroke-linecap="round"/><rect x="3.6" y="0.8" width="13.6" height="9.8" rx="1.6" fill="#0b0b0b"/><path d="M5.4 8.8 L8.2 5.4 L9.8 7.2 L12.2 3.8 L15.6 8.8 Z" fill="#f5f5f5"/><circle cx="7" cy="3.6" r="1" fill="#f5f5f5"/></svg>
<svg class="abs" style="left:533px;top:414px" width="19" height="15" viewBox="0 0 19 15"><g fill="none" stroke="#0b0b0b" stroke-width="2.1" stroke-linecap="round"><path d="M8.6 10.6 L7.1 12 A3.3 3.3 0 0 1 2.4 7.3 L5.2 4.6 A3.3 3.3 0 0 1 10.6 5.8"/><path d="M10.2 3.9 L11.7 2.5 A3.3 3.3 0 0 1 16.4 7.2 L13.6 9.9 A3.3 3.3 0 0 1 8.2 8.7"/></g></svg>
<svg class="abs" style="left:559.4px;top:413.6px" width="16" height="16" viewBox="0 0 16 16"><g fill="none" stroke="#0b0b0b" stroke-width="2.1"><path d="M6.2 2.8 H3 A1.5 1.5 0 0 0 1.5 4.3 V12.6 A1.5 1.5 0 0 0 3 14.1 H11.3 A1.5 1.5 0 0 0 12.8 12.6 V9.6" stroke-linecap="round"/><path d="M6.8 9 L13 2.8" stroke-linecap="round"/></g><path d="M9 0.6 H15.4 V7 Z" fill="#0b0b0b"/></svg>
<svg class="abs" style="left:594.6px;top:413.6px" width="16" height="16" viewBox="0 0 16 16"><g fill="none" stroke="#0b0b0b" stroke-width="2.1"><circle cx="6.4" cy="6.4" r="4.9"/><path d="M10.2 10.2 L14.8 14.8" stroke-linecap="round"/></g></svg>
<svg class="abs" style="left:618px;top:414px" width="15" height="15" viewBox="0 0 15 15"><g fill="none" stroke="#0b0b0b" stroke-width="2"><path d="M1 4.4 H11 M14 10.6 H4" stroke-linecap="round"/></g><path d="M9.6 0.7 L14.4 4.4 L9.6 8.1 Z M5.4 6.9 L0.6 10.6 L5.4 14.3 Z" fill="#0b0b0b"/></svg>
<svg class="abs" style="left:651.6px;top:415.2px" width="18" height="12" viewBox="0 0 18 12"><rect x="1" y="1" width="15.6" height="9.8" rx="1.6" fill="#fdfdfd" stroke="#0b0b0b" stroke-width="1.5"/><g fill="#0b0b0b"><rect x="3.2" y="3" width="1.5" height="1.3"/><rect x="5.6" y="3" width="1.5" height="1.3"/><rect x="8" y="3" width="1.5" height="1.3"/><rect x="10.4" y="3" width="1.5" height="1.3"/><rect x="12.8" y="3" width="1.5" height="1.3"/><rect x="3.2" y="5.2" width="1.5" height="1.3"/><rect x="5.6" y="5.2" width="1.5" height="1.3"/><rect x="8" y="5.2" width="1.5" height="1.3"/><rect x="10.4" y="5.2" width="1.5" height="1.3"/><rect x="12.8" y="5.2" width="1.5" height="1.3"/><rect x="5" y="7.5" width="7.6" height="1.4"/></g></svg>
<svg class="abs" style="left:638.2px;top:446.8px" width="16" height="16" viewBox="0 0 16 16"><g fill="none" stroke="#0b0b0b" stroke-width="2.2"><circle cx="3.6" cy="3.6" r="2.3"/><circle cx="3.6" cy="12" r="2.3"/><path d="M5.4 5.2 L15 13.6 M5.4 10.4 L15 1.8" stroke-linecap="round"/></g></svg>
<div class="abs" style="left:663px;top:453.3px;width:12.2px;height:1.9px;border-radius:1px;background:#0b0b0b"></div>
<svg class="abs" style="left:695.6px;top:447.8px" width="15" height="13" viewBox="0 0 15 13"><rect x="1.1" y="1.1" width="12.8" height="10.8" rx="1.6" fill="none" stroke="#0b0b0b" stroke-width="2"/><path d="M1 4.2 H14 M1 8 H14 M7.5 4.2 V12" stroke="#0b0b0b" stroke-width="1.6"/><rect x="1" y="1" width="13" height="2.6" fill="#0b0b0b"/></svg>
<svg class="abs" style="left:730.6px;top:446.4px" width="16" height="16" viewBox="0 0 16 16"><g fill="none" stroke="#102010" stroke-width="1.6"><circle cx="7.8" cy="7.8" r="6.7"/><path d="M3.1 3.1 L12.5 12.5"/></g></svg>
<svg class="abs" style="left:754.4px;top:446.8px" width="12" height="15.4" viewBox="0 0 12 15.4"><path d="M1.8 0.3 H7 L11.4 4.8 V13.6 A1.5 1.5 0 0 1 9.9 15.1 H1.8 A1.5 1.5 0 0 1 .3 13.6 V1.8 A1.5 1.5 0 0 1 1.8 .3Z" fill="#0b0b0b"/><path d="M7.2 0.3 V4.6 H11.4 Z" fill="#f5f5f5"/><path d="M7.9 0.9 V3.9 H10.8" fill="#0b0b0b"/><path d="M4.6 7.6 L2.6 9.7 L4.6 11.8 M7.2 7.6 L9.2 9.7 L7.2 11.8" fill="none" stroke="#f5f5f5" stroke-width="1.3"/></svg>
<svg class="abs" style="left:773.6px;top:446.8px" width="14" height="15.4" viewBox="0 0 14 15.4"><path d="M3.6 4.6 H2 A1.2 1.2 0 0 0 .9 5.8 V13.2 A1.2 1.2 0 0 0 2 14.4 H7.6 A1.2 1.2 0 0 0 8.8 13.2 V12.4" fill="none" stroke="#0b0b0b" stroke-width="1.7"/><path d="M6.4 .3 H10.6 L13.6 3.3 V9.6 A1.3 1.3 0 0 1 12.3 10.9 H6.4 A1.3 1.3 0 0 1 5.1 9.6 V1.6 A1.3 1.3 0 0 1 6.4 .3Z" fill="#0b0b0b"/></svg>
<svg class="abs" style="left:1072px;top:413.4px" width="16" height="16" viewBox="0 0 16 16"><circle cx="8" cy="8" r="7.6" fill="#0b0b0b"/><text x="8" y="11.8" text-anchor="middle" font-family="Liberation Sans,sans-serif" font-weight="700" font-size="10.5" fill="#f5f5f5">?</text></svg>
<svg class="abs" style="left:1095.4px;top:413.4px" width="16.4" height="16" viewBox="0 0 16.4 16"><path d="M11.2 1.2 A1.7 1.7 0 0 1 13.6 1.2 L15.2 2.8 A1.7 1.7 0 0 1 15.2 5.2 L14 6.4 L10 2.4 Z" fill="#0b0b0b"/><path d="M9.2 3.2 L13.2 7.2 L5.6 14.8 L0.6 15.8 L1.6 10.8 Z" fill="#0b0b0b"/><path d="M2.2 12.2 L4.2 14.2 L1.6 14.8 Z" fill="#f5f5f5"/></svg>
<svg class="abs" style="left:1118.4px;top:414.6px" width="14" height="13.6" viewBox="0 0 14 13.6"><path d="M1.8 .3 H10 L13.7 4 V11.8 A1.5 1.5 0 0 1 12.2 13.3 H1.8 A1.5 1.5 0 0 1 .3 11.8 V1.8 A1.5 1.5 0 0 1 1.8 .3Z" fill="#0b0b0b"/><rect x="2.4" y="2.2" width="7" height="3" fill="#f5f5f5"/><circle cx="7" cy="9.2" r="1.9" fill="#f5f5f5"/></svg>
<svg class="abs" style="left:1139.6px;top:413.2px" width="16.4" height="16.4" viewBox="0 0 16.4 16.4"><path d="M15.9 3.6 L13.2 6.3 L10.8 5.6 L10.1 3.2 L12.8 .5 A4.6 4.6 0 0 0 7 6.2 L.9 12.3 A2.2 2.2 0 0 0 4.1 15.5 L10.2 9.4 A4.6 4.6 0 0 0 15.9 3.6Z" fill="#0b0b0b"/><circle cx="2.6" cy="13.8" r=".8" fill="#f5f5f5"/></svg>
<svg class="abs" style="left:1141.2px;top:447.8px" width="13.8" height="13.4" viewBox="0 0 13.8 13.4"><path d="M0 0 H5.8 L0 5.8Z M13.8 0 V5.8 L8 0Z M0 13.4 V7.6 L5.8 13.4Z M13.8 13.4 H8 L13.8 7.6Z" fill="#0b0b0b"/><path d="M2.4 2.4 L11.4 11 M11.4 2.4 L2.4 11" stroke="#0b0b0b" stroke-width="3.3"/></svg>

<!-- misc icons -->
<svg class="abs" style="left:1171px;top:270px" width="22" height="22" viewBox="0 0 22 22"><circle cx="8.8" cy="9.4" r="7.3" fill="#000"/><path d="M13.6 14.2 L18.4 18.6" stroke="#000" stroke-width="2.6" stroke-linecap="round"/><path d="M4.9 9.4 H12.7 M8.8 5.5 V13.3" stroke="#fff" stroke-width="2.2"/></svg>
<svg class="abs" style="left:953px;top:110px" width="11" height="6" viewBox="0 0 11 6"><path d="M0.4 0.4 H10 L5.2 5.2 Z" fill="#000"/></svg>
<svg class="abs" style="left:1155px;top:106.5px" width="16" height="8" viewBox="0 0 16 8"><path d="M0.8 0.4 H15 L7.9 7.4 Z" fill="#000"/></svg>
<svg class="abs" style="left:125px;top:439.4px" width="6" height="11" viewBox="0 0 6 11"><path d="M0.2 0.2 L5.6 5.4 L0.2 10.6 Z" fill="#000"/></svg>
<svg class="abs" style="left:113px;top:475.1px" width="6" height="11" viewBox="0 0 6 11"><path d="M0.2 0.2 L5.6 5.4 L0.2 10.6 Z" fill="#000"/></svg>
<svg class="abs" style="left:225.4px;top:510.8px" width="6" height="11" viewBox="0 0 6 11"><path d="M0.2 0.2 L5.6 5.4 L0.2 10.6 Z" fill="#000"/></svg>
<svg class="abs" style="left:146.4px;top:546.5px" width="6" height="11" viewBox="0 0 6 11"><path d="M0.2 0.2 L5.6 5.4 L0.2 10.6 Z" fill="#000"/></svg>
<!-- scrollbar arrows -->
<svg class="abs" style="left:1233.4px;top:93.4px" width="9" height="6" viewBox="0 0 9 6"><path d="M4.4 0.4 L8.4 5 H0.4 Z" fill="#8a8a8a"/></svg>
<svg class="abs" style="left:1233.4px;top:883.4px" width="9" height="6" viewBox="0 0 9 6"><path d="M4.2 5.2 L8 0.5 H0.4 Z" fill="#fff"/></svg>
<div class="abs" style="left:1140px;top:115px;width:5.7px;height:1px;background:#000"></div>

<span class="t" id="t_title" style="left:159.90px;top:107.88px;font-size:27.2px;line-height:27.2px;font-weight:700;color:#e36c0a;letter-spacing:-0.397px;">Las Cuencas Cuentan</span>
<span class="t" id="t_sub1" style="left:159.88px;top:143.99px;font-size:20.8px;line-height:20.8px;font-weight:400;color:#e36c0a;letter-spacing:0.298px;">Investigación y creación en cuencas</span>
<span class="t" id="t_sub2" style="left:160.20px;top:169.89px;font-size:20.8px;line-height:20.8px;font-weight:400;color:#e36c0a;letter-spacing:0.447px;">hidrográficas</span>
<span class="t" id="t_search" style="left:620.11px;top:106.20px;font-size:14.3px;line-height:14.3px;font-weight:700;color:#3a3a3a;letter-spacing:0.042px;">Buscar</span>
<span class="t" id="t_inicio" style="left:817.51px;top:106.20px;font-size:14.3px;line-height:14.3px;font-weight:700;color:#000;letter-spacing:0.524px;">Inicio</span>
<span class="t" id="t_proy" style="left:876.81px;top:106.20px;font-size:14.3px;line-height:14.3px;font-weight:700;color:#000;letter-spacing:0.403px;">Proyectos</span>
<span class="t" id="t_mapa" style="left:817.44px;top:145.16px;font-size:15.4px;line-height:15.4px;font-weight:700;color:#000;letter-spacing:0.967px;">Mapa</span>
<span class="t" id="t_desc" style="left:1044.18px;top:101.29px;font-size:15.6px;line-height:15.6px;font-weight:400;color:#000;letter-spacing:0.169px;text-decoration:underline;text-decoration-thickness:1px;text-underline-offset:1px;">Desconéctate</span>
<span class="t" id="t_sysmenu" style="left:58.13px;top:226.49px;font-size:17.5px;line-height:17.5px;font-weight:700;color:#fff;letter-spacing:-0.082px;">System Menu</span>
<span class="t" id="t_ult" style="left:57.88px;top:633.29px;font-size:17.5px;line-height:17.5px;font-weight:700;color:#fff;letter-spacing:-0.197px;">Últimas modificaciones</span>
<span class="t" id="t_h1" style="left:332.67px;top:219.34px;font-size:30.9px;line-height:30.9px;font-weight:700;color:#000;letter-spacing:0.496px;">Edit BioPehuenche</span>
<span class="t" id="t_tab1" style="left:361.81px;top:333.90px;font-size:14.3px;line-height:14.3px;font-weight:700;color:#000;letter-spacing:0.342px;">Edita la página</span>
<span class="t" id="t_tab2" style="left:536.85px;top:333.90px;font-size:14.3px;line-height:14.3px;font-weight:700;color:#000;letter-spacing:0.224px;">Categorías</span>
<span class="t" id="t_tab3" style="left:680.61px;top:333.90px;font-size:14.3px;line-height:14.3px;font-weight:700;color:#000;letter-spacing:0.535px;">Propiedades</span>
<span class="t" id="t_indent" style="left:543.67px;top:449.03px;font-size:13.2px;line-height:13.2px;font-weight:700;color:#111;letter-spacing:0.384px;">Indentation</span>
<span class="t" id="t_m0" style="left:71.89px;top:295.03px;font-size:14.5px;line-height:14.5px;font-weight:700;color:#000;letter-spacing:0.403px;">Inicio</span>
<span class="t" id="t_m1" style="left:71.89px;top:330.73px;font-size:14.5px;line-height:14.5px;font-weight:700;color:#000;letter-spacing:-0.070px;">Buscar</span>
<span class="t" id="t_m2" style="left:72.35px;top:366.43px;font-size:14.5px;line-height:14.5px;font-weight:700;color:#000;letter-spacing:0.222px;">Categorías</span>
<span class="t" id="t_m3" style="left:72.35px;top:402.13px;font-size:14.5px;line-height:14.5px;font-weight:700;color:#000;letter-spacing:0.466px;">Calendario</span>
<span class="t" id="t_m4" style="left:71.89px;top:437.83px;font-size:14.5px;line-height:14.5px;font-weight:700;color:#000;letter-spacing:1.088px;">MiTiki</span>
<span class="t" id="t_m5" style="left:72.80px;top:473.53px;font-size:14.5px;line-height:14.5px;font-weight:700;color:#000;letter-spacing:0.892px;">Wiki</span>
<span class="t" id="t_m6" style="left:72.35px;top:509.23px;font-size:14.5px;line-height:14.5px;font-weight:700;color:#000;letter-spacing:0.215px;">Galerías de archivos</span>
<span class="t" id="t_m7" style="left:72.35px;top:544.93px;font-size:14.5px;line-height:14.5px;font-weight:700;color:#000;letter-spacing:0.253px;">Opciones</span>
<span class="t" id="t_l0" style="left:86.10px;top:686.35px;font-size:15.3px;line-height:15.3px;font-weight:400;color:#000;letter-spacing:0.459px;text-decoration:underline;text-decoration-thickness:1px;text-underline-offset:2px;">Riachuelo</span>
<span class="t" id="t_l1" style="left:86.10px;top:706.15px;font-size:15.3px;line-height:15.3px;font-weight:400;color:#000;letter-spacing:0.282px;text-decoration:underline;text-decoration-thickness:1px;text-underline-offset:2px;">HomePage</span>
<span class="t" id="t_l2" style="left:86.10px;top:725.95px;font-size:15.3px;line-height:15.3px;font-weight:400;color:#000;letter-spacing:0.331px;text-decoration:underline;text-decoration-thickness:1px;text-underline-offset:2px;">Publicaciones</span>
<span class="t" id="t_l3" style="left:86.58px;top:745.75px;font-size:15.3px;line-height:15.3px;font-weight:400;color:#000;letter-spacing:0.368px;text-decoration:underline;text-decoration-thickness:1px;text-underline-offset:2px;">Cómo miramos la</span>
<span class="t" id="t_l4" style="left:86.34px;top:765.55px;font-size:15.3px;line-height:15.3px;font-weight:400;color:#000;letter-spacing:0.368px;text-decoration:underline;text-decoration-thickness:1px;text-underline-offset:2px;">naturaleza</span>
<span class="t" id="t_l5" style="left:86.10px;top:785.35px;font-size:15.3px;line-height:15.3px;font-weight:400;color:#000;letter-spacing:0.049px;text-decoration:underline;text-decoration-thickness:1px;text-underline-offset:2px;">La cuenca</span>
<span class="t" id="t_l6" style="left:86.10px;top:805.15px;font-size:15.3px;line-height:15.3px;font-weight:400;color:#000;letter-spacing:0.635px;text-decoration:underline;text-decoration-thickness:1px;text-underline-offset:2px;">Equipo</span>
<span class="t" id="t_l7" style="left:86.34px;top:824.95px;font-size:15.3px;line-height:15.3px;font-weight:400;color:#000;letter-spacing:0.896px;text-decoration:underline;text-decoration-thickness:1px;text-underline-offset:2px;">nproy</span>
<span class="t" id="t_l8" style="left:86.10px;top:844.75px;font-size:15.3px;line-height:15.3px;font-weight:400;color:#000;letter-spacing:0.292px;text-decoration:underline;text-decoration-thickness:1px;text-underline-offset:2px;">Navegación por la costa del</span>
<span class="t" id="t_l9" style="left:86.10px;top:864.55px;font-size:15.3px;line-height:15.3px;font-weight:400;color:#000;letter-spacing:0.844px;text-decoration:underline;text-decoration-thickness:1px;text-underline-offset:2px;">Nahuel</span>
<span class="t" id="t_l10" style="left:86.10px;top:884.35px;font-size:15.3px;line-height:15.3px;font-weight:400;color:#000;letter-spacing:0.335px;text-decoration:underline;text-decoration-thickness:1px;text-underline-offset:2px;">BioPehuenche</span>
<span class="t" id="t_n1" style="left:70.24px;top:686.35px;font-size:15.3px;line-height:15.3px;font-weight:400;color:#000;letter-spacing:0.978px;">1.</span>
<span class="t" id="t_n2" style="left:69.68px;top:706.15px;font-size:15.3px;line-height:15.3px;font-weight:400;color:#000;letter-spacing:1.200px;">2.</span>
<span class="t" id="t_n3" style="left:69.92px;top:725.95px;font-size:15.3px;line-height:15.3px;font-weight:400;color:#000;letter-spacing:1.200px;">3.</span>
<span class="t" id="t_n4" style="left:70.16px;top:745.75px;font-size:15.3px;line-height:15.3px;font-weight:400;color:#000;letter-spacing:1.061px;">4.</span>
<span class="t" id="t_n5" style="left:69.92px;top:785.35px;font-size:15.3px;line-height:15.3px;font-weight:400;color:#000;letter-spacing:1.200px;">5.</span>
<span class="t" id="t_n6" style="left:69.68px;top:805.15px;font-size:15.3px;line-height:15.3px;font-weight:400;color:#000;letter-spacing:1.200px;">6.</span>
<span class="t" id="t_n7" style="left:69.68px;top:824.95px;font-size:15.3px;line-height:15.3px;font-weight:400;color:#000;letter-spacing:1.200px;">7.</span>
<span class="t" id="t_n8" style="left:69.92px;top:844.75px;font-size:15.3px;line-height:15.3px;font-weight:400;color:#000;letter-spacing:1.200px;">8.</span>
<span class="t" id="t_n9" style="left:69.68px;top:884.35px;font-size:15.3px;line-height:15.3px;font-weight:400;color:#000;letter-spacing:1.200px;">9.</span>
<span class="t" id="t_e0" style="left:373.31px;top:486.07px;font-size:14.8px;line-height:14.8px;font-weight:700;color:#000;letter-spacing:0.211px;white-space:pre;">!BioPehuenche</span>
<span class="t" id="t_e1" style="left:374.47px;top:507.97px;font-size:14.8px;line-height:14.8px;font-weight:700;color:#000;letter-spacing:0.393px;white-space:pre;">{img fileId="74" thumb="box"}</span>
<span class="t" id="t_e3" style="left:374.24px;top:551.77px;font-size:14.8px;line-height:14.8px;font-weight:700;color:#000;letter-spacing:0.294px;white-space:pre;">- ((Equipo|Quienes somos))</span>
<span class="t" id="t_e5" style="left:374.24px;top:595.57px;font-size:14.8px;line-height:14.8px;font-weight:700;color:#000;letter-spacing:0.049px;white-space:pre;">-  ((La cuenca))</span>
<span class="t" id="t_e7" style="left:374.24px;top:639.37px;font-size:14.8px;line-height:14.8px;font-weight:700;color:#000;letter-spacing:0.447px;white-space:pre;">- ((nproy|Nuestro proyecto))</span>
<span class="t" id="t_e9" style="left:374.24px;top:683.17px;font-size:14.8px;line-height:14.8px;font-weight:700;color:#000;letter-spacing:0.141px;white-space:pre;">- ((Lecturas recomendadas))</span>
<svg class="abs" style="left:0;top:0;pointer-events:none" width="1247" height="896" viewBox="0 0 1247 896">
<ellipse cx="573" cy="341" rx="64.8" ry="32.8" fill="none" stroke="rgba(30,215,0,0.76)" stroke-width="12.6"/>
<path d="M640.1 378.7 L710.2 391.7 L694.4 412.4 L839.6 522.7 L832.4 532.3 L687.2 422 L671.4 442.8 Z" fill="rgba(30,215,0,0.76)"/>
</svg>

<div class="abs" style="left:0;top:0;width:1px;height:896px;background:#0a0a0a"></div>
<div class="abs" style="left:1px;top:0;width:1245px;height:1px;background:#2c2e2d"></div>
</div>
</body>
</html>
